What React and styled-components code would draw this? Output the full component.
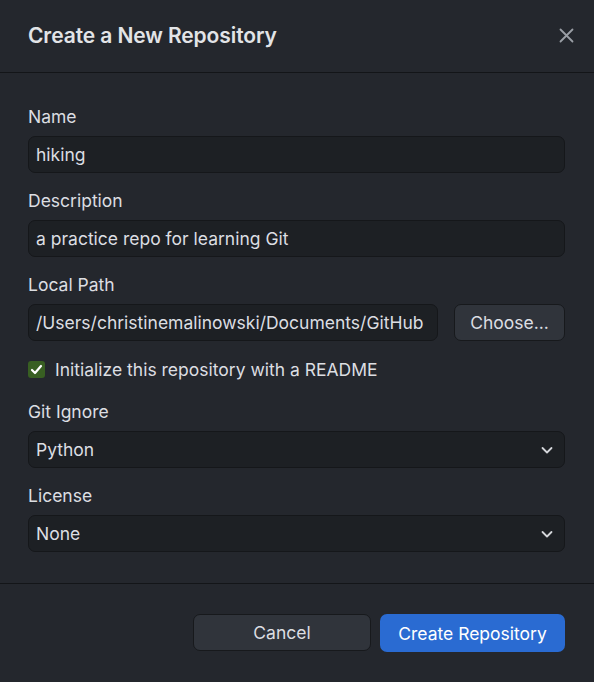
import React, { useState } from 'react'
import styled, { createGlobalStyle } from 'styled-components'

const GlobalStyle = createGlobalStyle`
  html, body {
    margin: 0;
    padding: 0;
    background: #24272d;
  }
  body {
    font-family: Inter, "Noto Sans", "Liberation Sans", sans-serif;
    -webkit-font-smoothing: antialiased;
  }
`

const Dialog = styled.div`
  width: 594px;
  height: 682px;
  background: #24272d;
  color: #dfe1e4;
  display: flex;
  flex-direction: column;
  box-sizing: border-box;
`

const Header = styled.div`
  height: 73px;
  box-sizing: border-box;
  display: flex;
  align-items: center;
  justify-content: space-between;
  padding: 0 18px 2px 28px;
  border-bottom: 1px solid #131518;
`

const Title = styled.h1`
  margin: 0;
  font-size: 21px;
  font-weight: 600;
  color: #e2e4e7;
  letter-spacing: -0.1px;
`

const CloseButton = styled.button`
  background: none;
  border: none;
  padding: 0;
  width: 20px;
  height: 20px;
  display: flex;
  align-items: center;
  justify-content: center;
  cursor: pointer;
`

const Body = styled.div`
  padding: 34px 29px 31px 28px;
  display: flex;
  flex-direction: column;
  border-bottom: 1px solid #131518;
`

const Field = styled.div`
  display: flex;
  flex-direction: column;
  margin-bottom: ${p => p.$gap ?? 18}px;
`

const Label = styled.label`
  font-size: 17.5px;
  line-height: 20px;
  color: #dcdee2;
  margin-bottom: 9px;
`

const Row = styled.div`
  display: flex;
  gap: 16px;
`

const Input = styled.input`
  flex: ${p => (p.$grow ? 1 : 'none')};
  min-width: 0;
  height: 37px;
  box-sizing: border-box;
  background: #1d2024;
  border: 1px solid #15171a;
  border-radius: 7px;
  padding: 0 7px;
  font-family: inherit;
  font-size: 17.5px;
  color: #dcdee2;
  outline: none;
`

const SelectBox = styled.div`
  height: 37px;
  box-sizing: border-box;
  background: #1d2024;
  border: 1px solid #15171a;
  border-radius: 7px;
  padding: 0 10px 0 7px;
  font-size: 17.5px;
  color: #dcdee2;
  display: flex;
  align-items: center;
  justify-content: space-between;
`

const SecondaryButton = styled.button`
  height: 37px;
  box-sizing: border-box;
  width: ${p => p.$width}px;
  background: #30343b;
  border: 1px solid #17191c;
  border-radius: 7px;
  font-family: inherit;
  font-size: 17.5px;
  color: #dcdee2;
  cursor: pointer;
`

const PrimaryButton = styled.button`
  height: 38px;
  box-sizing: border-box;
  width: 185px;
  background: #2a6bd2;
  border: none;
  border-radius: 7px;
  font-family: inherit;
  font-size: 17.5px;
  color: #ffffff;
  cursor: pointer;
`

const CheckRow = styled.label`
  display: flex;
  align-items: center;
  gap: 10px;
  font-size: 17.5px;
  color: #dcdee2;
  margin: 18px 0 22px;
  cursor: pointer;
`

const CheckBox = styled.span`
  width: 17px;
  height: 17px;
  border-radius: 3px;
  background: ${p => (p.$checked ? '#385f22' : '#1d2024')};
  display: flex;
  align-items: center;
  justify-content: center;
`

const Footer = styled.div`
  flex: 1;
  display: flex;
  justify-content: flex-end;
  align-items: flex-start;
  gap: 9px;
  padding: 30px 29px 0 0;
`

const Chevron = () => (
  <svg width="14" height="14" viewBox="0 0 14 14" fill="none">
    <path d="M2.5 5l4.5 4.5L11.5 5" stroke="#d4d6da" strokeWidth="1.8" strokeLinecap="round" strokeLinejoin="round" />
  </svg>
)

export default function App() {
  const [checked, setChecked] = useState(true)
  return (
    <>
      <GlobalStyle />
      <Dialog>
        <Header>
          <Title>Create a New Repository</Title>
          <CloseButton aria-label="Close">
            <svg width="15" height="15" viewBox="0 0 15 15">
              <path d="M1.5 1.5l12 12M13.5 1.5l-12 12" stroke="#9a9ea5" strokeWidth="1.8" strokeLinecap="round" />
            </svg>
          </CloseButton>
        </Header>
        <Body>
          <Field>
            <Label>Name</Label>
            <Input defaultValue="hiking" />
          </Field>
          <Field>
            <Label>Description</Label>
            <Input defaultValue="a practice repo for learning Git" />
          </Field>
          <Field $gap={0}>
            <Label>Local Path</Label>
            <Row>
              <Input $grow defaultValue="/Users/christinemalinowski/Documents/GitHub" />
              <SecondaryButton $width={111}>Choose...</SecondaryButton>
            </Row>
          </Field>
          <CheckRow onClick={() => setChecked(c => !c)}>
            <CheckBox $checked={checked}>
              {checked && (
                <svg width="13" height="13" viewBox="0 0 13 13">
                  <path d="M2 7l3 3 6-7" stroke="#ffffff" strokeWidth="2.2" fill="none" strokeLinecap="round" strokeLinejoin="round" />
                </svg>
              )}
            </CheckBox>
            Initialize this repository with a README
          </CheckRow>
          <Field>
            <Label>Git Ignore</Label>
            <SelectBox>
              Python
              <Chevron />
            </SelectBox>
          </Field>
          <Field $gap={0}>
            <Label>License</Label>
            <SelectBox>
              None
              <Chevron />
            </SelectBox>
          </Field>
        </Body>
        <Footer>
          <SecondaryButton $width={178}>Cancel</SecondaryButton>
          <PrimaryButton>Create Repository</PrimaryButton>
        </Footer>
      </Dialog>
    </>
  )
}
